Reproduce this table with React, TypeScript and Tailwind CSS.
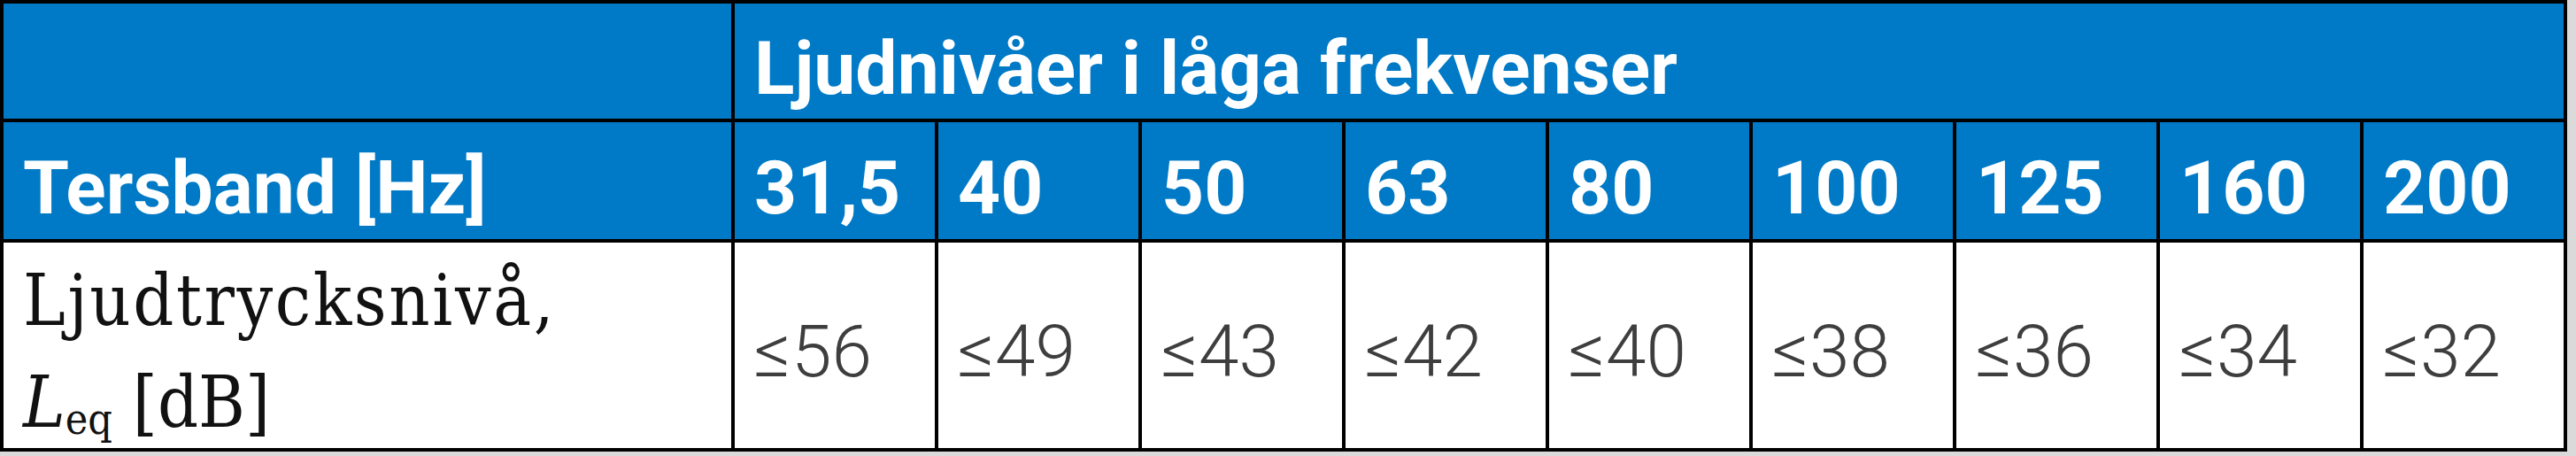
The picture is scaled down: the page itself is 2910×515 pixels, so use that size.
import React from 'react';

const bands = ['31,5', '40', '50', '63', '80', '100', '125', '160', '200'];
const levels = ['56', '49', '43', '42', '40', '38', '36', '34', '32'];

const headFont = { fontFamily: 'Roboto, "Liberation Sans", sans-serif' };

const App = () => {
  return (
    <div className="w-[2910px] h-[515px] bg-[#dadada]">
      <div
        className="grid grid-cols-[822px_repeat(9,226px)] grid-rows-[130px_132px_232px] gap-[4px] p-[4px] bg-black w-[2900px]"
        style={headFont}
      >
        {/* Row 1 */}
        <div className="bg-[#007ac6]" />
        <div className="col-span-9 bg-[#007ac6] text-white font-bold text-[84px] leading-none pl-[22px] pt-[32px]">
          Ljudnivåer i låga frekvenser
        </div>

        {/* Row 2 */}
        <div className="bg-[#007ac6] text-white font-bold text-[84px] leading-none pl-[22px] pt-[33px]">
          Tersband [Hz]
        </div>
        {bands.map((b) => (
          <div
            key={b}
            className="bg-[#007ac6] text-white font-bold text-[84px] leading-none pl-[22px] pt-[33px]"
          >
            {b}
          </div>
        ))}

        {/* Row 3 */}
        <div
          className="bg-white text-[#111] text-[80px] leading-[115px] pl-[22px] pt-[8px]"
          style={{ fontFamily: '"DejaVu Serif Condensed", "DejaVu Serif", serif' }}
        >
          <div className="tracking-[2.6px]">Ljudtrycksnivå,</div>
          <div>
            <span className="italic">L</span>
            <span className="text-[48px] relative top-[8px]">eq</span> [dB]
          </div>
        </div>
        {levels.map((v) => (
          <div
            key={v}
            className="bg-white text-[#3e3e3e] font-light text-[82px] leading-none pl-[22px] pt-[82px]"
          >
            ≤{v}
          </div>
        ))}
      </div>
    </div>
  );
};

export default App;
